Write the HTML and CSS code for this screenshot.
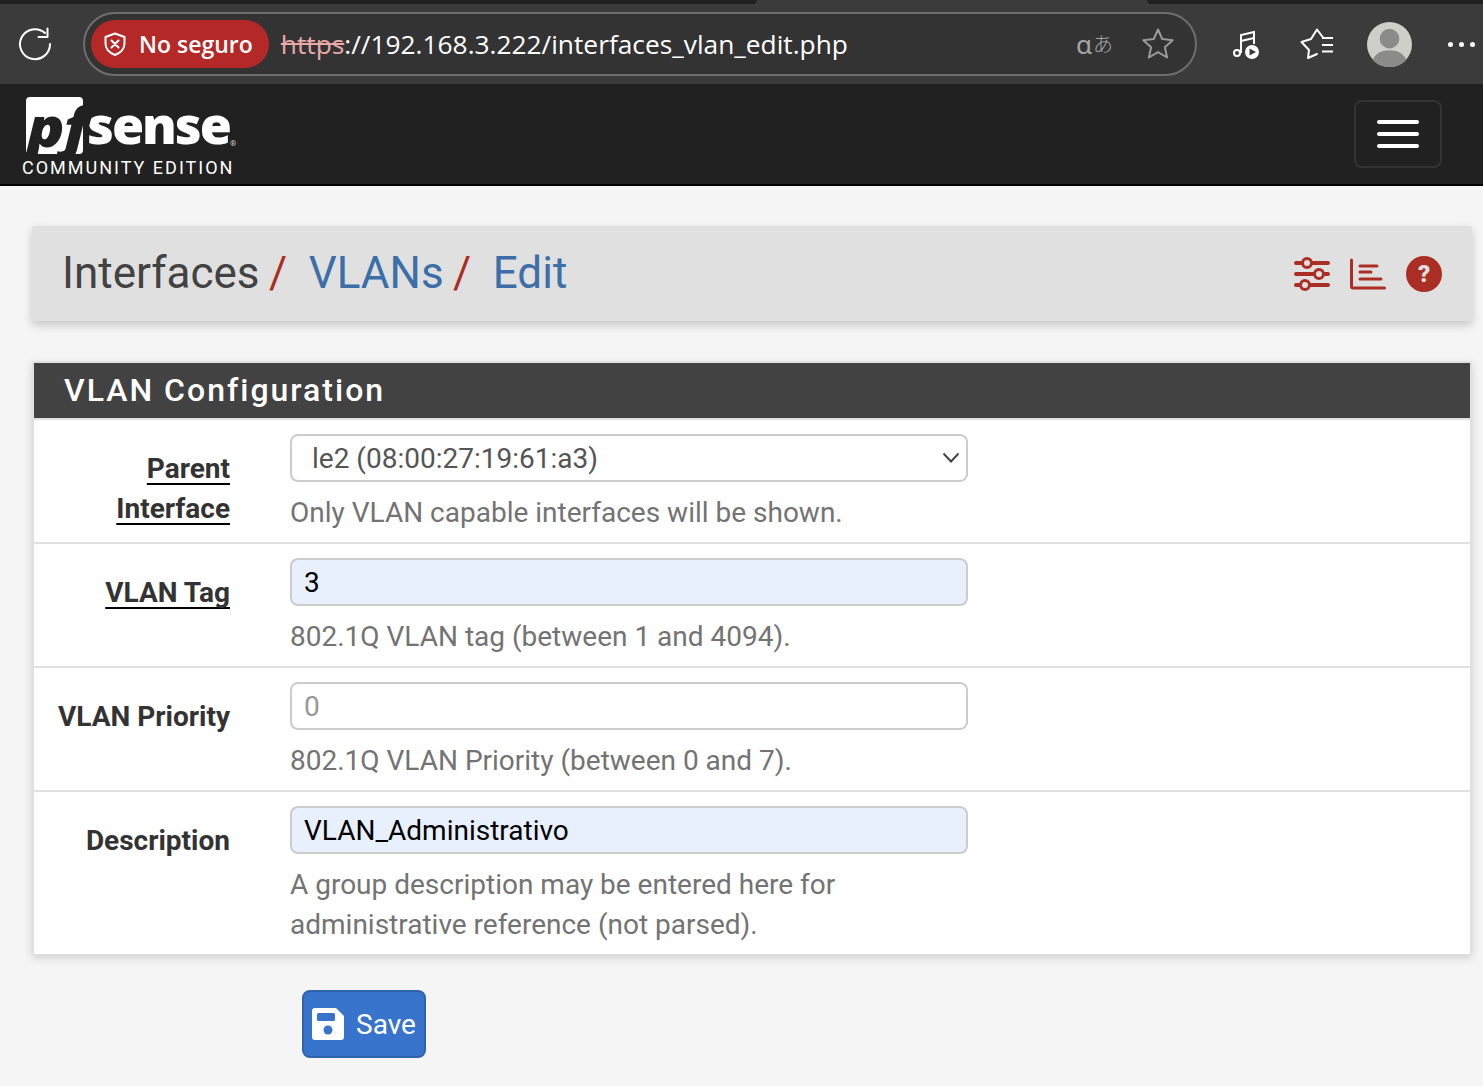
FILE: index.html
```html
<!DOCTYPE html>
<html lang="en">

<head>
    <meta charset="UTF-8">
    <meta name="viewport" content="width=device-width, initial-scale=1.0">
    <title>Interfaces: VLANs: Edit</title>

    <link rel="stylesheet" href="styles.css">
</head>

<body>
    <div class="tab-strip">
        <div class="strip-dark strip-left"></div>
        <div class="strip-active"></div>
        <div class="strip-dark strip-right"></div>
    </div>

    <div class="toolbar">
        <svg class="reload" width="36" height="36" viewBox="0 0 36 36">
            <path d="M33 18A15 15 0 1 1 28 7" fill="none" stroke="#fff" stroke-width="2" stroke-linecap="round"/>
            <path d="M21.500 11H30.500V2.500" fill="none" stroke="#fff" stroke-width="2" stroke-linecap="round" stroke-linejoin="round"/>
        </svg>

        <div class="address">
            <div class="not-secure">
                <svg width="24" height="26" viewBox="0 0 24 26">
                    <path d="M12 2.500 L21.500 6 V12.500 C21.500 18 17.500 21.800 12 24 C6.500 21.800 2.500 18 2.500 12.500 V6 Z" fill="none" stroke="#fff" stroke-width="2" stroke-linejoin="round"/>
                    <path d="M8.500 9.500l7 7M15.500 9.500l-7 7" stroke="#fff" stroke-width="2" stroke-linecap="round"/>
                </svg>
                <span>No seguro</span>
            </div>
            <div class="url"><span class="scheme">https</span><span class="rest">://192.168.3.222/interfaces_vlan_edit.php</span></div>
            <span class="translate">ɑ<span class="translate-kana">あ</span></span>
            <svg class="star" width="34" height="34" viewBox="0 0 34 34">
                <path d="M17 2.500l4.300 9.600 10.400 1.100-7.800 7 2.200 10.300L17 25.200 7.900 30.500l2.200-10.300-7.800-7 10.400-1.100z" fill="none" stroke="#9a9a9a" stroke-width="2" stroke-linejoin="round"/>
            </svg>
        </div>

        <div class="browser-actions">
            <svg class="action-music" width="30" height="30" viewBox="0 0 30 30">
                <circle cx="6" cy="24" r="3" fill="none" stroke="#fff" stroke-width="2"/>
                <path d="M10 24V6L23 3V15" fill="none" stroke="#fff" stroke-width="2"/>
                <path d="M10 12l13-3" fill="none" stroke="#fff" stroke-width="2"/>
                <circle cx="21" cy="23" r="7" fill="#fff"/>
                <path d="M18.500 19.500l6.500 3.500-6.500 3.500z" fill="#3b3b3b"/>
            </svg>
            <svg class="action-favs" width="36" height="34" viewBox="0 0 36 34">
                <path d="M23 10.500L17 2.500L11 12L1.500 15L9 23L8 31L17 27" fill="none" stroke="#fff" stroke-width="2" stroke-linejoin="round" stroke-linecap="round"/>
                <path d="M22 11h11M22 18h11M22 24.500h11" stroke="#fff" stroke-width="2"/>
            </svg>
            <div class="avatar">
                <svg width="45" height="45" viewBox="0 0 46 46">
                    <circle cx="23" cy="23" r="23" fill="#cfcfca"/>
                    <circle cx="23" cy="17" r="10" fill="#8b8b88"/>
                    <path d="M6 38.500C9 32 15 29 23 29s14 3 17 9.500C36 43.500 30 46 23 46S10 43.500 6 38.500z" fill="#8b8b88"/>
                </svg>
            </div>
            <div class="more"><i></i><i></i><i></i></div>
        </div>
    </div>

    <nav class="navbar">
        <div class="brand">
            <div class="logo">
                <div class="logo-box"><span class="logo-pf">pf</span></div>
                <span class="logo-sense">sense</span>
                <span class="logo-reg">®</span>
            </div>
            <div class="edition">COMMUNITY EDITION</div>
        </div>
        <button class="menu-toggle" type="button">
            <span></span><span></span><span></span>
        </button>
    </nav>

    <main class="content">
        <header class="page-header">
            <h1>Interfaces<span class="sep">/</span><a href="#">VLANs</a><span class="sep">/</span><a href="#">Edit</a></h1>
            <div class="header-icons">
                <svg width="36" height="34" viewBox="0 0 36 34">
                    <path d="M2 6h32M2 17h32M2 28h32" stroke="#ab2e24" stroke-width="4" stroke-linecap="round"/>
                    <circle cx="13" cy="6" r="4.500" fill="#e0e0e0" stroke="#ab2e24" stroke-width="3"/>
                    <circle cx="25" cy="17" r="4.500" fill="#e0e0e0" stroke="#ab2e24" stroke-width="3"/>
                    <circle cx="11" cy="28" r="4.500" fill="#e0e0e0" stroke="#ab2e24" stroke-width="3"/>
                </svg>
                <svg width="36" height="34" viewBox="0 0 36 34">
                    <path d="M1.500 3v26.500q0 1.500 1.500 1.500H34.500" fill="none" stroke="#ab2e24" stroke-width="3" stroke-linecap="round"/>
                    <path d="M10 9h17M10 15h11M10 22h21" stroke="#ab2e24" stroke-width="3" stroke-linecap="round"/>
                </svg>
                <div class="help-icon">?</div>
            </div>
        </header>

        <section class="panel">
            <h2 class="panel-title">VLAN Configuration</h2>

            <div class="row">
                <label class="row-label"><span class="underlined">Parent</span><br><span class="underlined">Interface</span></label>
                <div class="row-field">
                    <div class="select-wrap">
                        <select class="control">
                            <option>le2 (08:00:27:19:61:a3)</option>
                        </select>
                        <svg class="chevron" width="18" height="12" viewBox="0 0 18 12">
                            <path d="M1.500 1.500L9 9.500l7.500-8" fill="none" stroke="#444" stroke-width="2"/>
                        </svg>
                    </div>
                    <p class="help">Only VLAN capable interfaces will be shown.</p>
                </div>
            </div>

            <div class="row">
                <label class="row-label"><span class="underlined">VLAN Tag</span></label>
                <div class="row-field">
                    <input class="control filled" type="text" value="3">
                    <p class="help">802.1Q VLAN tag (between 1 and 4094).</p>
                </div>
            </div>

            <div class="row">
                <label class="row-label">VLAN Priority</label>
                <div class="row-field">
                    <input class="control" type="text" placeholder="0">
                    <p class="help">802.1Q VLAN Priority (between 0 and 7).</p>
                </div>
            </div>

            <div class="row">
                <label class="row-label">Description</label>
                <div class="row-field">
                    <input class="control filled" type="text" value="VLAN_Administrativo">
                    <p class="help help-narrow">A group description may be entered here for administrative reference (not parsed).</p>
                </div>
            </div>
        </section>

        <button class="save" type="submit">
            <svg width="32" height="32" viewBox="0 0 32 32">
                <path d="M3 0H24L32 8V29Q32 32 29 32H3Q0 32 0 29V3Q0 0 3 0Z" fill="#fff"/>
                <rect x="5" y="5" width="18" height="8" rx="1.500" fill="#3874cb"/>
                <circle cx="16" cy="22" r="4.500" fill="#3874cb"/>
            </svg>
            Save
        </button>
    </main>
</body>

</html>
```

FILE: styles.css
```css
body {
    margin: 0;
    background-color: #f5f5f5;
    font-family: Roboto, sans-serif;
    font-size: 28px;
    line-height: 40px;
    color: #424242;
    overflow: hidden;
}

.tab-strip {
    display: flex;
    height: 4px;
    background-color: #3b3b3b;
}

.strip-dark {
    background-color: #202020;
}

.strip-left {
    width: 757px;
    border-bottom-right-radius: 4px;
}

.strip-active {
    flex: 1;
}

.strip-right {
    width: 336px;
    border-bottom-left-radius: 4px;
}

.toolbar {
    display: flex;
    align-items: center;
    height: 80px;
    background-color: #3b3b3b;
    padding: 0 0 0 17px;
    box-sizing: border-box;
}

.reload {
    flex: none;
    margin-right: 30px;
}

.address {
    display: flex;
    align-items: center;
    width: 1114px;
    height: 64px;
    box-sizing: border-box;
    padding: 0 20px 0 6px;
    border: 2px solid #6e6e6e;
    border-radius: 32px;
    background-color: #333;
    font-family: "Open Sans", sans-serif;
}

.not-secure {
    display: flex;
    align-items: center;
    gap: 12px;
    height: 48px;
    padding: 0 16px 0 12px;
    border-radius: 24px;
    background-color: #b42828;
    color: #fff;
    font-size: 23px;
    font-weight: 600;
}

.url {
    flex: 1;
    margin-left: 12px;
    font-size: 26.3px;
    color: #fff;
}

.scheme {
    color: #e8a9a9;
    text-decoration: line-through;
}

.translate {
    display: flex;
    align-items: center;
    margin-right: 28px;
    font-family: "Noto Sans", sans-serif;
    font-size: 26px;
    color: #a6a6a6;
}

.translate-kana {
    margin-left: 1px;
    font-family: "Noto Sans CJK JP", sans-serif;
    font-size: 20px;
    font-weight: 300;
}

.browser-actions {
    display: flex;
    align-items: center;
    margin-left: 34px;
}

.action-favs {
    margin: 0 31px 0 39px;
}

.avatar {
    display: flex;
    width: 45px;
    height: 45px;
    margin-right: 36px;
}

.more {
    display: flex;
    gap: 6px;
}

.more i {
    width: 5px;
    height: 5px;
    border-radius: 50%;
    background-color: #fff;
}

.navbar {
    display: flex;
    justify-content: space-between;
    align-items: flex-start;
    height: 102px;
    box-sizing: border-box;
    padding: 12px 41px 0 22px;
    background-color: #212121;
    border-bottom: 2px solid #000;
}

.logo {
    display: flex;
    align-items: flex-end;
    height: 58px;
    padding-left: 4px;
}

.logo-box {
    width: 57px;
    height: 57px;
    background-color: #fff;
    border-radius: 4px;
}

/* same colour as the navbar, so the part past the box doesn't show */
.logo-pf {
    display: block;
    margin: 4px 0 0 1px;
    font-family: "Open Sans", sans-serif;
    font-size: 54px;
    line-height: 50px;
    font-weight: 800;
    font-style: italic;
    color: #212121;
    letter-spacing: -1px;
    transform: scaleX(1.15);
    transform-origin: left center;
}

.logo-sense {
    margin: 0 0 7px 4px;
    font-family: "Open Sans", sans-serif;
    font-size: 52px;
    line-height: 46px;
    font-weight: 800;
    color: #fff;
    letter-spacing: -2px;
}

.logo-reg {
    margin-bottom: 2px;
    font-size: 8px;
    line-height: 16px;
    color: #ccc;
}

.edition {
    margin-top: 2px;
    font-size: 18px;
    line-height: 24px;
    letter-spacing: 2px;
    color: #fff;
}

.menu-toggle {
    display: flex;
    flex-direction: column;
    justify-content: center;
    gap: 8px;
    width: 88px;
    height: 68px;
    margin-top: 4px;
    padding: 0 21px;
    background: transparent;
    border: 2px solid #333;
    border-radius: 8px;
}

.menu-toggle span {
    height: 4px;
    border-radius: 2px;
    background-color: #fff;
}

.content {
    padding: 40px 11px 0 32px;
}

.page-header {
    display: flex;
    justify-content: space-between;
    align-items: center;
    height: 95px;
    padding: 0 30px;
    background-color: #e0e0e0;
    box-shadow: 0 4px 10px rgba(0, 0, 0, 0.2);
    border-radius: 2px;
}

.page-header h1 {
    margin: 0 0 1px;
    font-size: 44px;
    line-height: 48px;
    font-weight: 400;
    color: #424242;
}

.page-header a {
    color: #3c6ea8;
    text-decoration: none;
}

.sep {
    color: #ab2e24;
    margin: 0 21.5px 0 9.5px;
}

.header-icons {
    display: flex;
    align-items: center;
    gap: 20px;
}

.help-icon {
    width: 36px;
    height: 36px;
    border-radius: 50%;
    background-color: #ab2e24;
    color: #e0e0e0;
    font-size: 24px;
    font-weight: 900;
    line-height: 36px;
    text-align: center;
}

.panel {
    margin-top: 40px;
    background-color: #fff;
    border: 2px solid #e0e0e0;
    border-bottom-width: 1px;
    box-shadow: 0 3px 8px rgba(0, 0, 0, 0.15);
}

.panel-title {
    margin: 0;
    height: 55px;
    padding-left: 30px;
    background-color: #424242;
    color: #fff;
    font-size: 32px;
    line-height: 55px;
    font-weight: 500;
    letter-spacing: 2px;
}

.row {
    display: flex;
    padding: 14px 0 9px;
    border-top: 2px solid #e0e0e0;
}

.row-label {
    flex: none;
    width: 196px;
    padding-top: 15px;
    text-align: right;
    font-weight: 700;
    color: #333;
}

.underlined {
    text-decoration: underline 2px #000;
    text-underline-offset: 5px;
    text-decoration-skip-ink: none;
}

.row-field {
    margin-left: 60px;
    width: 678px;
}

.select-wrap {
    position: relative;
}

.chevron {
    position: absolute;
    right: 8px;
    top: 18px;
}

.control {
    display: block;
    width: 100%;
    height: 48px;
    box-sizing: border-box;
    padding: 0 12px;
    background-color: #fff;
    border: 2px solid #ccc;
    border-radius: 8px;
    font-family: Roboto, sans-serif;
    font-size: 28px;
    color: #000;
}

select.control {
    appearance: none;
    padding-left: 20px;
    color: #555;
}

.control::placeholder {
    color: #999;
}

.filled {
    background-color: #e8f0fe;
}

.help {
    margin: 11px 0 0;
    color: #737373;
}

.help-narrow {
    width: 560px;
}

.save {
    display: flex;
    align-items: center;
    gap: 12px;
    margin: 35px 0 0 270px;
    width: 124px;
    height: 68px;
    padding: 0 0 0 8px;
    background-color: #3874cb;
    border: 2px solid #2f64ad;
    border-radius: 8px;
    color: #fff;
    font-family: Roboto, sans-serif;
    font-size: 28px;
}
```
